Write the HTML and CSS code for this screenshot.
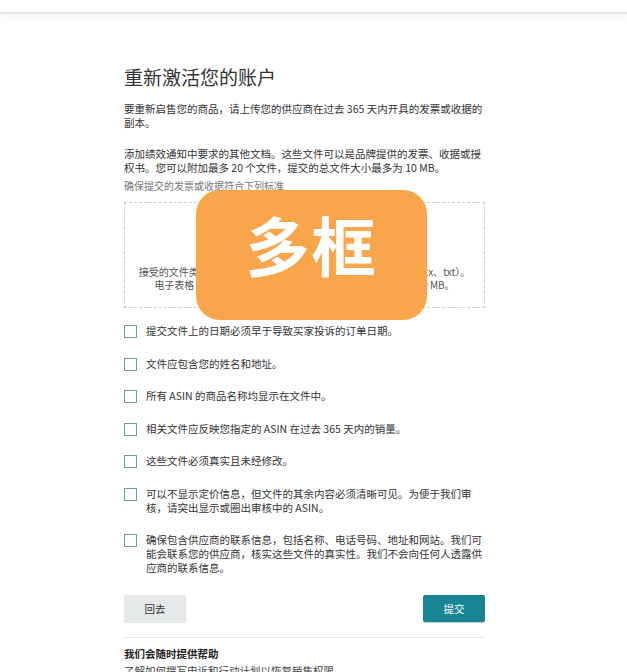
FILE: index.html
```html
<!DOCTYPE html>
<html lang="zh-CN">
<head>
    <meta charset="UTF-8">
    <meta name="viewport" content="width=device-width, initial-scale=1.0">
    <title>重新激活您的账户</title>
    <link rel="stylesheet" href="styles.css">
</head>
<body>
    <div class="topbar"></div>

    <div class="page">
        <h1 class="title">重新激活您的账户</h1>
        <p class="text">要重新启售您的商品，请上传您的供应商在过去 365 天内开具的发票或收据的副本。</p>
        <p class="text">添加绩效通知中要求的其他文档。这些文件可以是品牌提供的发票、收据或授权书。您可以附加最多 20 个文件，提交的总文件大小最多为 10 MB。</p>
        <p class="hint">确保提交的发票或收据符合下列标准</p>

        <div class="dropzone">
            <p class="drop-title">将文件拖放到此处或点击上传</p>
            <p class="drop-info">接受的文件类型：图片（jpg、png、gif）、文档（pdf、doc、docx、txt）。</p>
            <p class="drop-info">电子表格（xls、xlsx、csv）。单个文件及总文件大小不超过 10 MB。</p>
            <div class="badge">多框</div>
        </div>

        <div class="checklist">
            <label class="check"><span class="box"></span><span>提交文件上的日期必须早于导致买家投诉的订单日期。</span></label>
            <label class="check"><span class="box"></span><span>文件应包含您的姓名和地址。</span></label>
            <label class="check"><span class="box"></span><span>所有 ASIN 的商品名称均显示在文件中。</span></label>
            <label class="check"><span class="box"></span><span>相关文件应反映您指定的 ASIN 在过去 365 天内的销量。</span></label>
            <label class="check"><span class="box"></span><span>这些文件必须真实且未经修改。</span></label>
            <label class="check"><span class="box"></span><span>可以不显示定价信息，但文件的其余内容必须清晰可见。为便于我们审核，请突出显示或圈出审核中的 ASIN。</span></label>
            <label class="check"><span class="box"></span><span>确保包含供应商的联系信息，包括名称、电话号码、地址和网站。我们可能会联系您的供应商，核实这些文件的真实性。我们不会向任何人透露供应商的联系信息。</span></label>
        </div>

        <div class="actions">
            <button class="btn btn-back">回去</button>
            <button class="btn btn-submit">提交</button>
        </div>

        <div class="help">
            <h3>我们会随时提供帮助</h3>
            <p>了解如何撰写申诉和行动计划以恢复销售权限</p>
        </div>
    </div>
</body>
</html>
```

FILE: styles.css
```css
body {
    margin: 0;
    padding: 0;
    background: #fff;
    color: #444;
    font-family: "Noto Sans CJK SC", "Noto Sans", sans-serif;
    overflow: hidden;
}
.topbar {
    height: 12px;
    border-bottom: 2px solid #e2e4e4;
    box-shadow: 0 4px 8px rgba(0, 0, 0, 0.04);
}
.page {
    width: 361px;
    margin-left: 124px;
    padding-top: 50px;
}
.title {
    font-size: 19px;
    font-weight: normal;
    color: #333;
    margin: 0 0 12px;
    line-height: 26px;
}
.text {
    font-size: 10.5px;
    line-height: 14px;
    margin: 0 0 17px;
    color: #333;
}
.hint {
    font-size: 10px;
    line-height: 14px;
    margin: -13px 0 9px;
    color: #777;
}
.dropzone {
    position: relative;
    height: 104px;
    border: 1px dashed #c8cccc;
    text-align: center;
    margin-bottom: 16px;
}
.drop-title {
    margin: 46px 0 2px;
    font-size: 10.5px;
    line-height: 14px;
    color: #aaa;
}
.drop-info {
    margin: 0;
    font-size: 10px;
    line-height: 13px;
    color: #555;
    white-space: nowrap;
}
.badge {
    position: absolute;
    left: 71px;
    top: -13px;
    width: 231px;
    height: 130px;
    border-radius: 24px;
    background: #f9a54b;
    color: #fff;
    font-size: 64px;
    font-weight: bold;
    line-height: 106px;
    text-align: center;
    letter-spacing: 2px;
}
.checklist {
    display: flex;
    flex-direction: column;
    gap: 18.5px;
}
.check {
    display: flex;
    gap: 9px;
    font-size: 10.5px;
    line-height: 14px;
    color: #333;
}
.box {
    flex: none;
    width: 11px;
    height: 11px;
    border: 1px solid #6f9c9c;
    margin-top: 1px;
}
.actions {
    display: flex;
    justify-content: space-between;
    margin-top: 20px;
}
.btn {
    width: 62px;
    height: 27px;
    border: none;
    border-radius: 2px;
    font-family: inherit;
    font-size: 10.5px;
}
.btn-back {
    background: #e5e9e9;
    color: #333;
    box-shadow: 0 1px 1px rgba(0, 0, 0, 0.12);
}
.btn-submit {
    background: #188494;
    color: #fff;
    box-shadow: 0 1px 1px rgba(0, 0, 0, 0.2);
}
.help {
    margin-top: 15px;
    border-top: 1px solid #e3e3e3;
    padding-top: 9px;
}
.help h3 {
    margin: 0;
    font-size: 10.5px;
    line-height: 14px;
    color: #222;
}
.help p {
    margin: 3px 0 0;
    font-size: 10.5px;
    line-height: 14px;
    color: #444;
}
```
